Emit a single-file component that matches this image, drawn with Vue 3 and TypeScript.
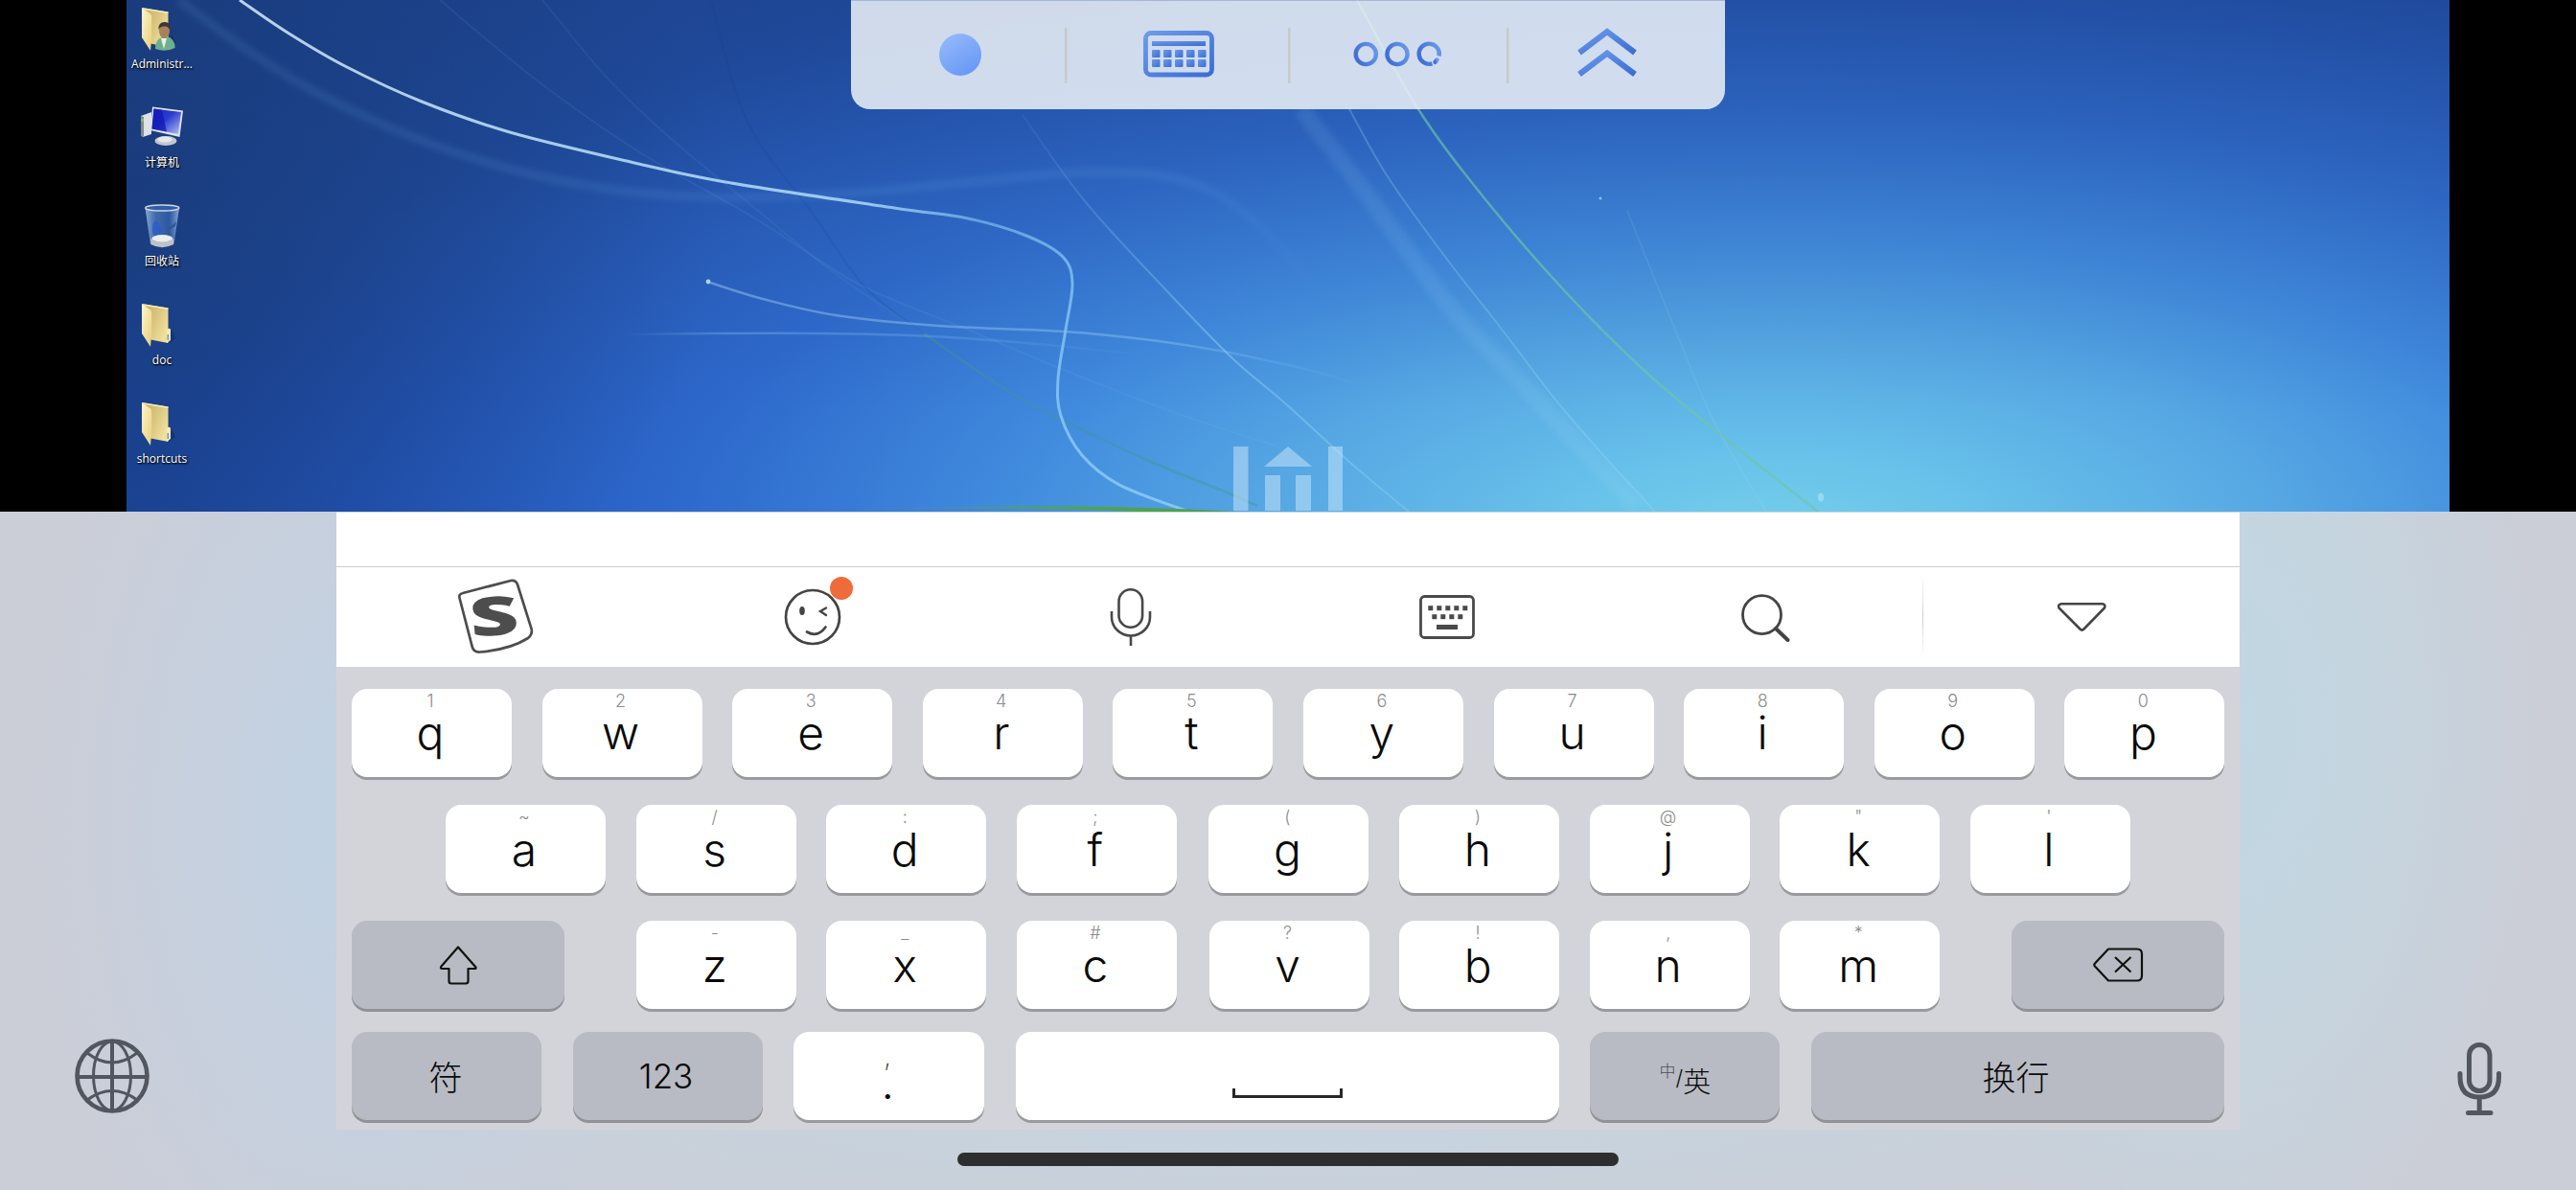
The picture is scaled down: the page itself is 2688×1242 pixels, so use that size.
<script setup lang="ts">
type Point = [number, number]

interface Trail {
  points: Point[]
  color: string
  width: number
  opacity: number
  soft?: boolean
}

interface Key {
  main: string
  hint: string
  nudge?: boolean
}

interface Shortcut {
  label: string
  kind: 'user' | 'computer' | 'bin' | 'folder'
}

// Catmull-Rom spline through the given points, as cubic segments
function smooth(p: Point[]): string {
  let d = `M${p[0][0]},${p[0][1]}`
  for (let i = 0; i < p.length - 1; i++) {
    const a = p[Math.max(i - 1, 0)]
    const b = p[i]
    const c = p[i + 1]
    const e = p[Math.min(i + 2, p.length - 1)]
    d += `C${b[0] + (c[0] - a[0]) / 6},${b[1] + (c[1] - a[1]) / 6} ${c[0] - (e[0] - b[0]) / 6},${c[1] - (e[1] - b[1]) / 6} ${c[0]},${c[1]}`
  }
  return d
}

const trails: Trail[] = [
  { points: [[187, 0], [252, 48], [329, 96], [436, 145], [551, 181], [666, 201], [780, 206], [895, 201], [1010, 190], [1110, 181], [1194, 181], [1255, 195], [1301, 224], [1350, 272], [1400, 330]], color: 'url(#veil)', width: 9, opacity: 0.12, soft: true },
  { points: [[566, 0], [635, 83], [704, 148], [796, 224], [872, 286], [964, 348]], color: '#6fb0d8', width: 2, opacity: 0.1 },
  { points: [[964, 348], [1048, 406], [1110, 439], [1201, 482], [1278, 513], [1312, 528]], color: '#3f9a82', width: 2.5, opacity: 0.4 },
  { points: [[459, 0], [559, 83], [666, 158], [788, 228], [895, 296], [1010, 344], [1110, 386], [1224, 430], [1330, 465]], color: '#8ccaf5', width: 2, opacity: 0.09 },
  { points: [[742, 0], [780, 127], [849, 224], [903, 300], [964, 348]], color: '#12407c', width: 2, opacity: 0.14 },
  { points: [[738, 294], [796, 312], [872, 329], [979, 340], [1110, 346], [1201, 355], [1278, 367], [1330, 378], [1366, 386], [1424, 403]], color: 'url(#comet)', width: 2.5, opacity: 0.4 },
  { points: [[650, 349], [742, 348], [857, 348], [972, 351], [1071, 358], [1201, 371]], color: 'url(#wisp)', width: 2.5, opacity: 0.32 },
  { points: [[1067, 120], [1132, 210], [1217, 303], [1286, 374], [1340, 420], [1408, 482], [1470, 534]], color: 'url(#ray)', width: 2, opacity: 0.42 },
  { points: [[1358, 114], [1424, 200], [1474, 269], [1524, 334], [1574, 386], [1632, 448], [1710, 530]], color: '#a6dcfa', width: 18, opacity: 0.11, soft: true },
  { points: [[1408, 114], [1449, 186], [1511, 272], [1565, 341], [1623, 417], [1673, 475], [1727, 534]], color: '#a8e0fa', width: 2, opacity: 0.25 },
  { points: [[1698, 220], [1748, 344], [1789, 441], [1843, 534]], color: '#b4e6fa', width: 2, opacity: 0.1 },
  { points: [[1416, 0], [1480, 114], [1549, 207], [1632, 303], [1715, 386], [1797, 455], [1897, 534]], color: '#6fc6a4', width: 2.5, opacity: 0.65 },
  { points: [[250, 0], [300, 34], [360, 69], [440, 106], [532, 138], [658, 169], [757, 190], [933, 217], [1010, 228], [1071, 246], [1109, 268], [1119, 296], [1112, 344], [1104, 396], [1107, 434], [1129, 475], [1168, 506], [1240, 534]], color: 'url(#trail)', width: 3, opacity: 0.88 },
]

const shortcuts: Shortcut[] = [
  { label: 'Administr...', kind: 'user' },
  { label: '计算机', kind: 'computer' },
  { label: '回收站', kind: 'bin' },
  { label: 'doc', kind: 'folder' },
  { label: 'shortcuts', kind: 'folder' },
]

const zip = (letters: string, hints: string): Key[] =>
  [...letters].map((main, i) => ({ main, hint: hints[i], nudge: main === 'g' || main === 'v' }))

const rowTop = zip('qwertyuiop', '1234567890')
const rowHome = zip('asdfghjkl', '~/:;()@"\'')
const rowLow = zip('zxcvbnm', '-_#?!,*')
</script>

<template>
  <div class="screen">
    <section class="remote">
      <div class="wallpaper">
        <svg class="trails" viewBox="132 0 2424 534">
          <defs>
            <linearGradient id="trail" gradientUnits="userSpaceOnUse" x1="250" y1="0" x2="1240" y2="534">
              <stop offset="0" stop-color="#cfe6f8" />
              <stop offset="0.6" stop-color="#a8d8f6" />
              <stop offset="0.7" stop-color="#68a8e2" />
              <stop offset="0.85" stop-color="#86c6f4" />
              <stop offset="1" stop-color="#8cccf6" />
            </linearGradient>
            <linearGradient id="veil" gradientUnits="userSpaceOnUse" x1="187" y1="0" x2="1400" y2="0">
              <stop offset="0" stop-color="#7fbdf0" />
              <stop offset="0.85" stop-color="#7fbdf0" />
              <stop offset="1" stop-color="#7fbdf0" stop-opacity="0" />
            </linearGradient>
            <linearGradient id="comet" gradientUnits="userSpaceOnUse" x1="738" y1="0" x2="1424" y2="0">
              <stop offset="0" stop-color="#b5def8" />
              <stop offset="0.7" stop-color="#8fcaf5" />
              <stop offset="1" stop-color="#8fcaf5" stop-opacity="0" />
            </linearGradient>
            <linearGradient id="wisp" gradientUnits="userSpaceOnUse" x1="650" y1="0" x2="1201" y2="0">
              <stop offset="0" stop-color="#8fcdf7" stop-opacity="0" />
              <stop offset="0.2" stop-color="#8fcdf7" />
              <stop offset="0.6" stop-color="#8fcdf7" stop-opacity="0.7" />
              <stop offset="1" stop-color="#8fcdf7" stop-opacity="0" />
            </linearGradient>
            <linearGradient id="ray" gradientUnits="userSpaceOnUse" x1="1067" y1="0" x2="1470" y2="0">
              <stop offset="0" stop-color="#9dd8fa" stop-opacity="0.15" />
              <stop offset="0.5" stop-color="#9dd8fa" />
              <stop offset="1" stop-color="#9dd8fa" stop-opacity="0.7" />
            </linearGradient>
            <linearGradient id="grass" x1="0" x2="1" y1="0" y2="0">
              <stop offset="0" stop-color="#4fa06c" stop-opacity="0" />
              <stop offset="0.6" stop-color="#4da45a" />
              <stop offset="1" stop-color="#49a04c" />
            </linearGradient>
            <filter id="soft" x="-5%" y="-5%" width="110%" height="110%">
              <feGaussianBlur stdDeviation="3" />
            </filter>
          </defs>
          <path
            v-for="(t, i) in trails"
            :key="i"
            :d="smooth(t.points)"
            :stroke="t.color"
            :stroke-width="t.width"
            :opacity="t.opacity"
            :filter="t.soft ? 'url(#soft)' : undefined"
            fill="none"
          />
          <path d="M920,531Q1110,524 1290,534L1190,534Q1080,529 920,532Z" fill="url(#grass)" />
          <circle cx="739" cy="294" r="2.4" fill="#a9d6f4" />
          <circle cx="1670" cy="207" r="1.5" fill="#8cc2ee" />
          <ellipse cx="1900" cy="519" rx="3" ry="4.5" fill="#93dbf0" />
          <g fill="#d3ecfb" opacity="0.48">
            <rect x="1287" y="466" width="15.500" height="67" />
            <rect x="1386" y="466" width="15" height="67" />
            <path d="M1344,466L1369,487H1319Z" />
            <rect x="1320" y="496" width="16" height="37" />
            <rect x="1352" y="496" width="16" height="37" />
          </g>
        </svg>

        <ul class="shortcuts">
          <li v-for="s in shortcuts" :key="s.label" class="shortcut">
            <svg class="shortcut-icon" viewBox="0 0 48 48">
              <defs>
                <linearGradient id="flap" x1="0" x2="1" y1="0" y2="1">
                  <stop offset="0" stop-color="#fdf6cc" />
                  <stop offset="1" stop-color="#e8cf7a" />
                </linearGradient>
                <linearGradient id="back" x1="0" x2="1" y1="0" y2="0.6">
                  <stop offset="0" stop-color="#c4ab62" />
                  <stop offset="0.5" stop-color="#d8c27c" />
                  <stop offset="1" stop-color="#f0e09a" />
                </linearGradient>
                <linearGradient id="display" x1="0" x2="1" y1="0" y2="1">
                  <stop offset="0" stop-color="#1428c8" />
                  <stop offset="0.45" stop-color="#2a3ccf" />
                  <stop offset="1" stop-color="#b9c2f4" />
                </linearGradient>
                <linearGradient id="glass" x1="0" x2="1" y1="0" y2="0">
                  <stop offset="0" stop-color="#a9c6ea" stop-opacity="0.8" />
                  <stop offset="0.3" stop-color="#5c8acb" stop-opacity="0.6" />
                  <stop offset="0.7" stop-color="#3f72bd" stop-opacity="0.5" />
                  <stop offset="1" stop-color="#a9c6ea" stop-opacity="0.8" />
                </linearGradient>
              </defs>
              <template v-if="s.kind === 'folder' || s.kind === 'user'">
                <path d="M30,44L38,38L34,30Z" fill="#0d2456" opacity="0.4" />
                <path d="M3,2L30.500,6.500V43L12,39.500Z" fill="url(#back)" />
                <path d="M3,2L30.500,6.500V8L6,4Z" fill="#f8eeba" />
                <path d="M3,2L12,8.500Q13.500,10 13.300,12V32L12,47L3,33Z" fill="url(#flap)" />
                <path v-if="s.kind === 'folder'" d="M29,29Q33,26 33,30V40L29,43Z" fill="#f6eab0" />
                <rect v-if="s.kind === 'folder'" x="29.500" y="34" width="1.600" height="6" fill="#6f9ad0" />
                <g v-else>
                  <path d="M17,45Q17,35 24,33L32,33Q38,37 37.500,44Q28,49 17,45Z" fill="#6fb08c" />
                  <path d="M23,34L26,45L29,34Z" fill="#e8f2ea" />
                  <ellipse cx="26.500" cy="26" rx="5.500" ry="8" fill="#a97f5c" />
                  <path d="M20.500,25Q20,16.500 27.500,17Q34,17 33,27Q31,21 27,21.500Q22,21 20.500,25Z" fill="#3a3735" />
                </g>
              </template>
              <template v-else-if="s.kind === 'computer'">
                <path d="M2,12L13,8V31L4,34L2,32Z" fill="#dfe2e5" />
                <path d="M2,12L5,13V34L2,32Z" fill="#85898d" />
                <rect x="2.500" y="15" width="2" height="3" fill="#7fdc3c" />
                <ellipse cx="28" cy="38" rx="11.500" ry="5" fill="#c4c8cd" />
                <ellipse cx="27" cy="36.500" rx="7.500" ry="3" fill="#e6e9ec" />
                <path d="M14,2.500L46,6.500L42.500,34L12,27Z" fill="#dfe2e6" />
                <path d="M15.500,4.500L44,8L41,31L13.500,25.500Z" fill="url(#display)" />
                <path d="M15.500,4.500L24,5.500L29,28.500L13.500,25.500Z" fill="#1018b4" opacity="0.75" />
              </template>
              <template v-else>
                <path d="M6.500,5L42,5L36.500,43Q24,49 12,43Z" fill="url(#glass)" />
                <path d="M14,23Q18,14 21,22Q26,28 23,34Q16,37 14,30Z" fill="#2a5cc4" opacity="0.8" />
                <path d="M30,28L39,19L38,24Z" fill="#1e4689" opacity="0.7" />
                <ellipse cx="24.300" cy="37" rx="11" ry="4" fill="#e9edf1" />
                <path d="M12,37L12.500,43Q24,49.500 36,43L36.500,37Q24,44 12,37Z" fill="#bcc2c8" />
                <ellipse cx="24.300" cy="5" rx="17.500" ry="3" fill="#2f5ea8" stroke="#cdd4dc" stroke-width="1.500" />
              </template>
            </svg>
            <span class="shortcut-label">{{ s.label }}</span>
          </li>
        </ul>
      </div>

      <nav class="dock">
        <svg viewBox="888 0 912 114" width="912" height="114">
          <defs>
            <linearGradient id="dot" x1="0.1" y1="0" x2="0.7" y2="1">
              <stop offset="0" stop-color="#97bbfa" />
              <stop offset="1" stop-color="#6798f7" />
            </linearGradient>
            <linearGradient id="ink" x1="0" y1="0" x2="1" y2="1">
              <stop offset="0" stop-color="#6c9aea" />
              <stop offset="1" stop-color="#3a6dd5" />
            </linearGradient>
            <linearGradient id="ink-back" x1="1" y1="0" x2="0" y2="0.4">
              <stop offset="0" stop-color="#6c9aea" />
              <stop offset="1" stop-color="#4072d6" />
            </linearGradient>
          </defs>
          <g fill="#c8c9cb">
            <rect x="1111" y="29" width="2.500" height="58" />
            <rect x="1344" y="29" width="2.500" height="58" />
            <rect x="1572" y="29" width="2.500" height="58" />
          </g>
          <circle cx="1002" cy="57" r="22" fill="url(#dot)" />
          <rect x="1195.500" y="34.500" width="69" height="43.500" rx="5.500" fill="none" stroke="url(#ink)" stroke-width="4.800" />
          <rect x="1202" y="43" width="56" height="5" fill="url(#ink)" />
          <g fill="url(#ink)">
            <rect v-for="n in 5" :key="n" :x="1190 + n * 12" y="52" width="8.500" height="8" rx="1" />
            <rect v-for="n in 5" :key="n + 5" :x="1190 + n * 12" y="62" width="8.500" height="8" rx="1" />
          </g>
          <g fill="none" stroke="url(#ink-back)" stroke-width="4.400">
            <circle cx="1425.300" cy="56.500" r="10.600" />
            <circle cx="1458" cy="56.500" r="10.600" />
            <path d="M1501.600,58.500A10.600,10.600 0 1 0 1494.500,66.300" />
            <path d="M1497.500,64.800L1499.500,62.500" stroke-linecap="round" />
          </g>
          <g fill="none" stroke="url(#ink)" stroke-width="6">
            <path d="M1648,55L1677,33L1706,55" />
            <path d="M1648,77.500L1677,55.500L1706,77.500" />
          </g>
        </svg>
      </nav>
    </section>

    <section class="input">
      <div class="side side-left">
        <svg class="globe" viewBox="0 0 80 80" width="80" height="80">
          <g fill="none" stroke="#52565f" stroke-width="3">
            <circle cx="40" cy="40" r="36.500" stroke-width="4.600" />
            <ellipse cx="40" cy="40" rx="19.500" ry="36" />
            <path d="M40,3V77" stroke-width="4" />
            <path d="M3,41H77" stroke-width="4" />
            <path d="M14,16Q40,36 66,16M14,65Q40,46 66,65" />
          </g>
        </svg>
      </div>

      <div class="panel">
        <div class="candidates"></div>
        <div class="tools">
          <svg class="tool" viewBox="0 0 331 104">
            <path
              transform="translate(109 -2)"
              d="M23,29L73,16Q78,15 80,20L94.500,66Q96,72 91,76Q72,88 41,90.500Q35,91 33,86L19.500,34Q18.500,30 23,29Z"
              fill="none" stroke="#4d4d4d" stroke-width="2.700"
            />
            <text class="brand" transform="translate(166.500 71) rotate(-3) skewX(3) scale(1.580 1)">S</text>
          </svg>
          <svg class="tool" viewBox="0 0 331 104">
            <g fill="none" stroke="#444" stroke-width="2.700" stroke-linecap="round">
              <circle cx="166" cy="52" r="28" />
              <path d="M180,42.500L174,46L180,50" stroke-width="2.400" />
              <path d="M160,67.500Q171,74 179.500,62.500" />
            </g>
            <ellipse cx="155" cy="45.500" rx="2.800" ry="4.500" fill="#444" />
            <circle cx="196" cy="22" r="12" fill="#ee6b3b" />
          </svg>
          <svg class="tool" viewBox="0 0 331 104">
            <g transform="translate(-1 0)" fill="none" stroke="#484848" stroke-width="2.600">
              <rect x="155.500" y="23.300" width="24.600" height="39.500" rx="12.300" />
              <path d="M148,46V52A20,19.500 0 0 0 188,52V46M168,71V82" />
            </g>
          </svg>
          <svg class="tool" viewBox="0 0 331 104">
            <rect x="138.500" y="30.500" width="55" height="43" rx="4" fill="none" stroke="#4a4a4a" stroke-width="2.800" />
            <g fill="#4a4a4a">
              <rect v-for="n in 5" :key="n" :x="137.300 + n * 9" y="40.200" width="5" height="5" />
              <rect v-for="n in 4" :key="n + 5" :x="141.300 + n * 9" y="49.200" width="5" height="5" />
              <rect x="155" y="60" width="22" height="5" />
            </g>
          </svg>
          <svg class="tool" viewBox="0 0 331 104">
            <circle cx="163.500" cy="49.700" r="20" fill="none" stroke="#444" stroke-width="2.800" />
            <path d="M178,64L190.500,76" stroke="#444" stroke-width="4" stroke-linecap="round" />
          </svg>
          <svg class="tool tool-last" viewBox="0 0 331 104">
            <path d="M145,38.200H188Q191.500,39 190,42.500L168.500,64.500Q166.500,66.500 164.500,64.500L142.500,42.500Q141,39 145,38.200Z" fill="none" stroke="#444" stroke-width="2.600" />
          </svg>
        </div>

        <div class="keys">
          <div class="row row-top">
            <div v-for="k in rowTop" :key="k.main" class="key">
              <span class="hint">{{ k.hint }}</span>
              <span class="main">{{ k.main }}</span>
            </div>
          </div>
          <div class="row row-home">
            <div v-for="k in rowHome" :key="k.main" class="key" :class="{ nudge: k.nudge }">
              <span class="hint">{{ k.hint }}</span>
              <span class="main">{{ k.main }}</span>
            </div>
          </div>
          <div class="row row-low">
            <div class="key dark shift">
              <svg viewBox="0 0 48 48" width="48" height="48">
                <path d="M24,5.500L42.500,26.500Q43,28 41.500,28H34.500V41Q34.500,43.500 32,43.500H17Q14.500,43.500 14.500,41V28H7.500Q5,28 6.500,25.500Z" fill="none" stroke="#111" stroke-width="2.200" stroke-linejoin="round" />
              </svg>
            </div>
            <div class="letters">
              <div v-for="k in rowLow" :key="k.main" class="key" :class="{ nudge: k.nudge }">
                <span class="hint">{{ k.hint }}</span>
                <span class="main">{{ k.main }}</span>
              </div>
            </div>
            <div class="key dark backspace">
              <svg viewBox="0 0 54 40" width="54" height="40">
                <g fill="none" stroke="#111" stroke-width="2.200" stroke-linejoin="round">
                  <path d="M17,3.500H47Q52,3.500 52,8.500V31.500Q52,36.500 47,36.500H17L3,21.500Q1.500,20 3,18.500Z" />
                  <path d="M24,12L40.500,27.500M40.500,12L24,27.500" />
                </g>
              </svg>
            </div>
          </div>
          <div class="row row-base">
            <div class="key dark k-symbols">符</div>
            <div class="key dark k-numbers">123</div>
            <div class="key k-punct">
              <span class="comma">,</span>
              <span class="period">.</span>
            </div>
            <div class="key k-space"><i class="space-mark"></i></div>
            <div class="key dark k-lang"><span class="zh">中</span><span class="slash">/</span><span class="en">英</span></div>
            <div class="key dark k-enter">换行</div>
          </div>
        </div>
      </div>

      <div class="side side-right">
        <svg class="dictate" viewBox="0 0 50 80" width="50" height="80">
          <g fill="none" stroke="#52565f" stroke-width="5" stroke-linecap="round">
            <rect x="14.500" y="5.500" width="21.500" height="48" rx="10.700" />
            <path d="M5,35.500V39Q5,60 25.200,60Q45.500,60 45.500,39V35.500" />
            <path d="M25.200,61V76M13.500,76.500H37" />
          </g>
        </svg>
      </div>
      <div class="home-indicator"></div>
    </section>
  </div>
</template>

<style>
body {
  margin: 0;
  background: #000;
}
</style>

<style scoped>
.screen {
  width: 2688px;
  height: 1242px;
  display: flex;
  flex-direction: column;
  overflow: hidden;
  font-family: Inter, 'Noto Sans CJK SC', sans-serif;
  color: #0a0a0a;
}

.remote {
  position: relative;
  height: 534px;
  padding: 0 132px;
  background: #000;
}

.wallpaper {
  position: relative;
  height: 534px;
  overflow: hidden;
  background:
    radial-gradient(ellipse 620px 560px at 0 210px, rgba(20, 48, 100, 0.5), rgba(20, 48, 100, 0) 100%),
    linear-gradient(to bottom, rgba(34, 70, 130, 0.28) 0%, rgba(50, 100, 160, 0.16) 45%, rgba(50, 100, 160, 0) 80%),
    radial-gradient(ellipse 1700px 650px at 1718px 560px, #74cfeb 0%, #68c2ea 13%, #55a6e3 32%, #3f88dd 49%, #2d68cb 68%, #2354b4 86%, #1d489f 100%, #1b4190 130%);
}

.trails {
  position: absolute;
  inset: 0;
  width: 2424px;
  height: 534px;
}

.shortcuts {
  position: relative;
  display: flex;
  flex-direction: column;
  gap: 23px;
  width: 74px;
  margin: 0;
  padding: 6px 0 0;
  list-style: none;
}

.shortcut {
  height: 80px;
  display: flex;
  flex-direction: column;
  align-items: center;
}

.shortcut-icon {
  width: 48px;
  height: 48px;
  margin-right: 1px;
}

.shortcut-label {
  margin-top: 5px;
  font: 12px/16px 'Open Sans', 'Noto Sans CJK SC', sans-serif;
  color: #fff;
  white-space: nowrap;
  text-shadow: 1px 1px 2px #000, 0 1px 2px rgba(0, 0, 0, 0.7);
}

.dock {
  position: absolute;
  left: 888px;
  top: 0;
  width: 912px;
  height: 114px;
  border-radius: 0 0 20px 20px;
  background: rgba(234, 240, 247, 0.87);
  box-shadow: inset 0 1px 0 rgba(120, 150, 190, 0.5);
}

.dock svg {
  display: block;
}

.input {
  position: relative;
  display: flex;
  height: 708px;
  background:
    radial-gradient(ellipse 340px 600px at 370px 320px, rgba(191, 211, 228, 0.95) 0%, rgba(196, 209, 227, 0.65) 45%, rgba(200, 206, 219, 0) 100%),
    radial-gradient(ellipse 330px 600px at 2320px 220px, #c0d7e3 0%, rgba(195, 215, 226, 0.8) 42%, rgba(203, 206, 214, 0) 100%),
    radial-gradient(ellipse 1200px 110px at 1344px 645px, #c6d4df 0%, rgba(203, 206, 218, 0) 100%),
    #cbced7;
}

.side {
  box-sizing: border-box;
  width: 351px;
}

.side-left {
  padding: 549px 0 0 77px;
}

.side-right {
  padding: 551px 0 0 225px;
}

.panel {
  width: 1986px;
  height: 645px;
  display: flex;
  flex-direction: column;
  background: #d3d4da;
}

.candidates {
  box-sizing: border-box;
  height: 58px;
  background: #fff;
  border-top: 1px solid #d5d7dc;
  border-bottom: 1px solid #cfcfd1;
}

.tools {
  display: flex;
  height: 104px;
  background: #fff;
}

.tool {
  width: 331px;
  height: 104px;
}

.tool-last {
  background: linear-gradient(to bottom, #fff 6%, #cfcfcf 50%, #fff 92%) no-repeat 0 0 / 1px 104px;
}

.brand {
  font: 800 56px 'Open Sans', sans-serif;
  text-anchor: middle;
  fill: #4d4d4d;
}

.keys {
  flex: 1;
  padding: 23px 16px 0;
}

.row {
  display: flex;
  height: 92px;
}

.row-top {
  gap: 31.600px;
}

.row-home {
  gap: 31.600px;
  margin-top: 29px;
  padding-left: 98px;
}

.row-low {
  margin-top: 29px;
  justify-content: space-between;
}

.letters {
  display: flex;
  gap: 31.600px;
}

.row-base {
  margin-top: 24px;
  justify-content: space-between;
}

.key {
  box-sizing: border-box;
  width: 167px;
  height: 92px;
  flex: none;
  display: flex;
  flex-direction: column;
  align-items: center;
  padding-right: 3px;
  border-radius: 16px;
  background: #fff;
  box-shadow: 0 3px 0 #999a9d;
}

.nudge {
  margin-left: 2px;
}

.hint {
  height: 25px;
  font-size: 18px;
  line-height: 25px;
  font-weight: 300;
  color: #8c8c8c;
}

.main {
  height: 41px;
  font-size: 48px;
  line-height: 41px;
  font-weight: 300;
}

.row-home .main,
.row-low .main {
  margin-top: 1px;
}

.dark {
  background: #b8bbc3;
  box-shadow: 0 3px 0 #909297;
  flex-direction: row;
  justify-content: center;
  padding-right: 0;
  font-size: 35px;
  font-weight: 300;
}

.shift,
.backspace {
  width: 222px;
}

.k-symbols,
.k-numbers {
  width: 198px;
}

.k-symbols,
.k-enter {
  padding-bottom: 2px;
}

.k-symbols {
  padding-right: 2px;
}

.k-numbers {
  padding-right: 3px;
}

.k-punct {
  width: 199px;
}

.comma {
  height: 28px;
  font-size: 30px;
  line-height: 28px;
  font-weight: 200;
  margin-top: 10px;
  color: #333;
}

.period {
  height: 30px;
  font-size: 48px;
  line-height: 30px;
  font-weight: 300;
}

.k-space {
  width: 567px;
  padding-right: 0;
}

.space-mark {
  box-sizing: border-box;
  width: 115px;
  height: 10px;
  margin-top: 59px;
  border: 3px solid #262828;
  border-top: 0;
}

.k-lang {
  width: 198px;
}

.zh {
  font-size: 17px;
  margin-bottom: 14px;
  color: #4c4e54;
}

.slash {
  font-size: 22px;
  margin-top: 3px;
}

.en {
  font-size: 29px;
  margin-top: 8px;
}

.k-enter {
  width: 431px;
  padding-right: 4px;
}

.home-indicator {
  position: absolute;
  left: 999px;
  bottom: 25px;
  width: 690px;
  height: 14px;
  border-radius: 7px;
  background: #2e2e2e;
}
</style>
